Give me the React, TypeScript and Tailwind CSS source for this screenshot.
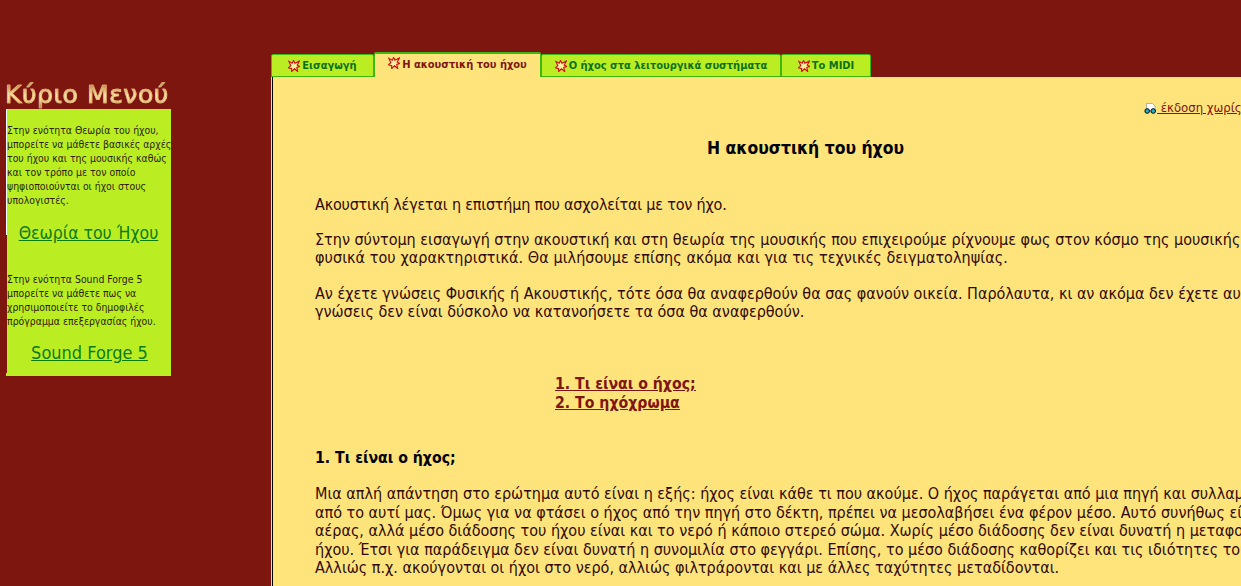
function Star() {
  return (
    <svg width="12" height="12" viewBox="0 0 13 13" className="shrink-0">
      <path d="M1 1.5 L4.5 3.5 L6 0.5 L7.5 3.5 L12.5 1 L10 5.5 L12.5 7 L9.5 8 L10.5 12.5 L7 9.5 L4 12.5 L4 9.5 L0.5 8.5 L3 6 Z" fill="#fff0a0" stroke="#d40a12" strokeWidth="1.2" />
    </svg>
  );
}

function Tab({ label, w, active = false }: { label: string; w: string; active?: boolean }) {
  return active ? (
    <div className={`${w} h-[25px] bg-[#ffe47c] border-t-2 border-x border-[#3cb80e] border-b-0 rounded-t-[2px] flex items-start justify-center gap-[2px] pt-[3px] text-[11px] font-bold text-[#7e1510] relative z-10`}>
      <Star />
      <span className="leading-[15px]">{label}</span>
    </div>
  ) : (
    <div className={`${w} h-[23px] bg-[#bbee22] border border-[#3cb80e] rounded-t-[2px] flex items-center justify-center gap-[2px] text-[11px] font-bold text-[#0b7016]`}>
      <Star />
      <span className="leading-[15px]">{label}</span>
    </div>
  );
}

function P({ children, className = "" }: { children: React.ReactNode; className?: string }) {
  return <p className={`text-[16px] leading-[18.6px] text-[#300a04] whitespace-nowrap ${className}`}>{children}</p>;
}

export default function App() {
  return (
    <div className="w-[1241px] h-[586px] overflow-hidden bg-[#7e1610] flex font-['DejaVu_Sans_Condensed','DejaVu_Sans',sans-serif]">
      <aside className="w-[271px] shrink-0 pt-[81px] pl-[5px]">
        <div className="w-[166px] h-[28px] text-[25px] leading-[28px] tracking-[0.6px] font-medium text-transparent bg-clip-text bg-[linear-gradient(to_bottom,#c8965a_20%,#ffe8a8_50%,#f8d690_70%,#b88850_90%)] [-webkit-text-stroke:0.7px_#e0b878] font-['DejaVu_Sans',sans-serif] whitespace-nowrap overflow-hidden">
          Κύριο Μενού
        </div>
        <div className="ml-[1px] w-[165px] h-[267px] flex">
          <div className="w-[1px] shrink-0 h-full bg-[linear-gradient(to_bottom,white_126px,#7e1610_126px,#7e1610_264px,#bbee22_264px)]" />
          <div className="w-[164px] shrink-0 overflow-hidden bg-[#bbee22] text-[10.4px] leading-[14px] text-[#2a1e06] pt-[14px] whitespace-nowrap">
            <div>
              Στην ενότητα Θεωρία του ήχου,<br />
              μπορείτε να μάθετε βασικές αρχές<br />
              του ήχου και της μουσικής καθώς<br />
              και τον τρόπο με τον οποίο<br />
              ψηφιοποιούνται οι ήχοι στους<br />
              υπολογιστές.
            </div>
            <a className="block text-center text-[17.5px] leading-[20px] mt-[16px] pr-[1px] text-[#0b7c10] underline">Θεωρία του Ήχου</a>
            <div className="mt-[29px]">
              Στην ενότητα Sound Forge 5<br />
              μπορείτε να μάθετε πως να<br />
              χρησιμοποιείτε το δημοφιλές<br />
              πρόγραμμα επεξεργασίας ήχου.
            </div>
            <a className="block text-center text-[18px] leading-[20px] mt-[15px] pl-[1px] text-[#0b7c10] underline">Sound Forge 5</a>
          </div>
        </div>
      </aside>

      <main className="flex-1 min-w-0 flex flex-col pt-[52px]">
        <div className="flex items-end h-[25px] shrink-0">
          <Tab label="Εισαγωγή" w="w-[103px]" />
          <Tab label="Η ακουστική του ήχου" w="w-[167px]" active />
          <Tab label="Ο ήχος στα λειτουργικά συστήματα" w="w-[240px]" />
          <Tab label="Το MIDI" w="w-[90px]" />
        </div>
        <div className="flex-1 w-[1100px] ml-[1px] bg-[#ffe47c] border-l border-l-black shadow-[-1px_0_0_#ffe47c] pl-[42px] pt-[22px]">
          <div className="flex items-center h-[16px] pl-[829px] mt-[1px] text-[13px] text-[#7e1510] whitespace-nowrap">
            <svg width="13" height="11" viewBox="0 0 13 11" className="shrink-0">
              <path d="M2.5 0.5 H8.5 L11 3 V8 H2.5 Z" fill="white" stroke="#888" strokeWidth="0.6" />
              <circle cx="3.2" cy="8" r="2.3" fill="#19b5c8" stroke="black" />
              <circle cx="9.2" cy="8" r="2.3" fill="#19b5c8" stroke="black" />
            </svg>
            <a className="underline">&nbsp;έκδοση χωρίς γραφικά</a>
          </div>
          <h1 className="text-[17.4px] leading-[22px] font-bold text-black mt-[21px] ml-[392px] whitespace-nowrap">Η ακουστική του ήχου</h1>
          <P className="mt-[37px] tracking-[-0.2px]">Ακουστική λέγεται η επιστήμη που ασχολείται με τον ήχο.</P>
          <P className="mt-[16px]">
            Στην σύντομη εισαγωγή στην ακουστική και στη θεωρία της μουσικής που επιχειρούμε ρίχνουμε φως στον κόσμο της μουσικής και<br />
            <span className="tracking-[0.06px]">φυσικά του χαρακτηριστικά. Θα μιλήσουμε επίσης ακόμα και για τις τεχνικές δειγματοληψίας.</span>
          </P>
          <P className="mt-[17px]">
            Αν έχετε γνώσεις Φυσικής ή Ακουστικής, τότε όσα θα αναφερθούν θα σας φανούν οικεία. Παρόλαυτα, κι αν ακόμα δεν έχετε αυτές τις<br />
            γνώσεις δεν είναι δύσκολο να κατανοήσετε τα όσα θα αναφερθούν.
          </P>
          <div className="mt-[52px] ml-[240px] text-[15.7px] leading-[19px] font-bold text-[#7e1510] underline">
            <a className="block">1. Τι είναι ο ήχος;</a>
            <a className="block">2. Το ηχόχρωμα</a>
          </div>
          <h2 className="mt-[36px] text-[15.7px] leading-[19px] font-bold text-black">1. Τι είναι ο ήχος;</h2>
          <P className="mt-[18px]">
            Μια απλή απάντηση στο ερώτημα αυτό είναι η εξής: ήχος είναι κάθε τι που ακούμε. Ο ήχος παράγεται από μια πηγή και συλλαμβάνεται<br />
            από το αυτί μας. Όμως για να φτάσει ο ήχος από την πηγή στο δέκτη, πρέπει να μεσολαβήσει ένα φέρον μέσο. Αυτό συνήθως είναι ο<br />
            αέρας, αλλά μέσο διάδοσης του ήχου είναι και το νερό ή κάποιο στερεό σώμα. Χωρίς μέσο διάδοσης δεν είναι δυνατή η μεταφορά του<br />
            ήχου. Έτσι για παράδειγμα δεν είναι δυνατή η συνομιλία στο φεγγάρι. Επίσης, το μέσο διάδοσης καθορίζει και τις ιδιότητες του ήχου.<br />
            Αλλιώς π.χ. ακούγονται οι ήχοι στο νερό, αλλιώς φιλτράρονται και με άλλες ταχύτητες μεταδίδονται.
          </P>
        </div>
      </main>
    </div>
  );
}
